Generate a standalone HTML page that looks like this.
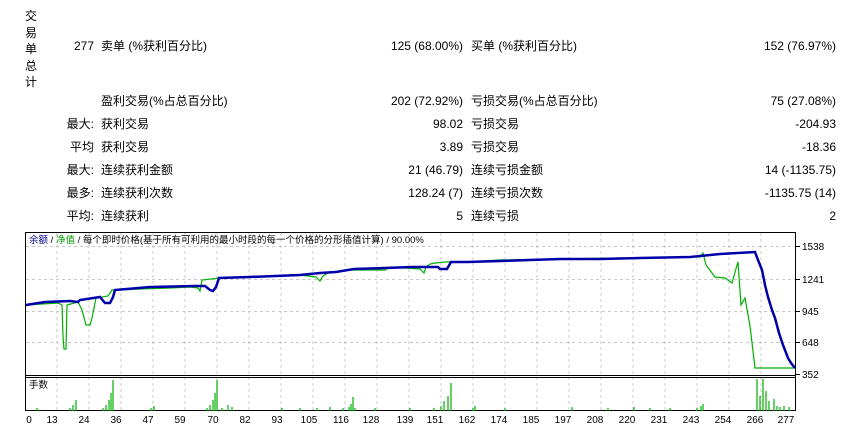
<!DOCTYPE html>
<html><head><meta charset="utf-8"><style>
body{margin:0;width:844px;height:430px;background:#fff;overflow:hidden;position:relative;font-family:"Liberation Sans","Noto Sans CJK SC",sans-serif;font-size:12px;color:#000}
.t{position:absolute;white-space:nowrap;line-height:14px}
.r{text-align:right}
</style></head><body>
<div class="t" style="left:24px;top:8px;width:14px;line-height:16.5px;text-align:center">交<br>易<br>单<br>总<br>计</div>

<div class="t r" style="left:40px;top:39px;width:54px">277</div>
<div class="t" style="left:101px;top:39px">卖单 (%获利百分比)</div>
<div class="t r" style="left:300px;top:39px;width:163px">125 (68.00%)</div>
<div class="t" style="left:471px;top:39px">买单 (%获利百分比)</div>
<div class="t r" style="left:640px;top:39px;width:196px">152 (76.97%)</div>

<div class="t" style="left:101px;top:94px">盈利交易(%占总百分比)</div>
<div class="t r" style="left:300px;top:94px;width:163px">202 (72.92%)</div>
<div class="t" style="left:471px;top:94px">亏损交易(%占总百分比)</div>
<div class="t r" style="left:640px;top:94px;width:196px">75 (27.08%)</div>

<div class="t r" style="left:40px;top:117px;width:54px">最大:</div>
<div class="t" style="left:101px;top:117px">获利交易</div>
<div class="t r" style="left:300px;top:117px;width:163px">98.02</div>
<div class="t" style="left:471px;top:117px">亏损交易</div>
<div class="t r" style="left:640px;top:117px;width:196px">-204.93</div>

<div class="t r" style="left:40px;top:140px;width:54px">平均</div>
<div class="t" style="left:101px;top:140px">获利交易</div>
<div class="t r" style="left:300px;top:140px;width:163px">3.89</div>
<div class="t" style="left:471px;top:140px">亏损交易</div>
<div class="t r" style="left:640px;top:140px;width:196px">-18.36</div>

<div class="t r" style="left:40px;top:163px;width:54px">最大:</div>
<div class="t" style="left:101px;top:163px">连续获利金额</div>
<div class="t r" style="left:300px;top:163px;width:163px">21 (46.79)</div>
<div class="t" style="left:471px;top:163px">连续亏损金额</div>
<div class="t r" style="left:640px;top:163px;width:196px">14 (-1135.75)</div>

<div class="t r" style="left:40px;top:186px;width:54px">最多:</div>
<div class="t" style="left:101px;top:186px">连续获利次数</div>
<div class="t r" style="left:300px;top:186px;width:163px">128.24 (7)</div>
<div class="t" style="left:471px;top:186px">连续亏损次数</div>
<div class="t r" style="left:640px;top:186px;width:196px">-1135.75 (14)</div>

<div class="t r" style="left:40px;top:209px;width:54px">平均:</div>
<div class="t" style="left:101px;top:209px">连续获利</div>
<div class="t r" style="left:300px;top:209px;width:163px">5</div>
<div class="t" style="left:471px;top:209px">连续亏损</div>
<div class="t r" style="left:640px;top:209px;width:196px">2</div>

<svg width="844" height="430" style="position:absolute;left:0;top:0" font-family="Liberation Sans, Noto Sans CJK SC, sans-serif">
<g stroke="#c8c8c8" stroke-dasharray="3,3" stroke-width="1">
<path d="M57 233V410M89 233V410M121 233V410M153 233V410M185 233V410M217 233V410M249 233V410M281 233V410M313 233V410M345 233V410M377 233V410M409 233V410M441 233V410M473 233V410M505 233V410M537 233V410M569 233V410M601 233V410M633 233V410M665 233V410M697 233V410M729 233V410M761 233V410"/>
<path d="M26 246.5H796M26 279.5H796M26 311.5H796M26 342.5H796"/>
</g>
<rect x="25.5" y="232.5" width="770" height="178" fill="none" stroke="#000"/>
<path d="M25 375.5H796M25 377.5H796" stroke="#000" stroke-width="1"/>
<g stroke="#000"><path d="M796 246.5h4M796 279.5h4M796 311.5h4M796 342.5h4M796 374.5h4"/></g>
<g font-size="10" fill="#000">
<text x="802" y="250">1538</text><text x="802" y="283">1241</text><text x="802" y="315">945</text><text x="802" y="346">648</text><text x="802" y="378">352</text>
</g>
<g font-size="10" fill="#000" text-anchor="middle">
<text x="29" y="423">0</text><text x="52" y="423">13</text><text x="84" y="423">24</text><text x="116" y="423">36</text><text x="148" y="423">47</text><text x="180" y="423">59</text><text x="213" y="423">70</text><text x="245" y="423">82</text><text x="277" y="423">93</text><text x="309" y="423">105</text><text x="341" y="423">116</text><text x="371" y="423">128</text><text x="405" y="423">139</text><text x="435" y="423">151</text><text x="467" y="423">162</text><text x="499" y="423">174</text><text x="531" y="423">185</text><text x="563" y="423">197</text><text x="595" y="423">208</text><text x="627" y="423">220</text><text x="659" y="423">231</text><text x="691" y="423">243</text><text x="723" y="423">254</text><text x="755" y="423">266</text><text x="786" y="423">277</text>
</g>
<text x="29" y="243" font-size="9.5"><tspan fill="#00008b">余额</tspan><tspan fill="#000"> / </tspan><tspan fill="#00a000">净值</tspan><tspan fill="#000"> / 每个即时价格(基于所有可利用的最小时段的每一个价格的分形插值计算) / 90.00%</tspan></text>
<text x="29" y="388" font-size="9.5" fill="#000">手数</text>
<path fill="none" stroke="#00b000" stroke-width="1.2" d="M26 305L58 303L62 305L63 336L64 349L66 349L67 305L78 302L82 310L86 325L90 325L92 318L96 298L108 296L112 290L120 290L140 289L170 288L190 287L198 288L200 291L202 280L220 278L250 277L300 275L316 277L320 281L323 276L330 272L350 270L385 270L390 267L420 269L424 273L426 267L430 264L435 263L445 262L465 262L500 260L560 259L620 258L700 257L703 253L706 265L715 277L725 278L732 283L737 265L738 262L741 305L745 298L750 326L755 368L795 368"/>
<path fill="none" stroke="#0000aa" stroke-width="2.5" d="M26 305L45 302L70 301L78 302L80 300L100 297L105 303L110 303L113 297L115 290L150 287L195 286L205 286L210 290L213 291L216 287L219 278L250 277L300 275L320 273L336 272L354 269L385 268L412 267L438 267L440 269L447 269L451 262L467 262L500 261L530 260L560 259L600 259L640 258L690 257L720 254L755 252L758 260L762 270L765 285L768 297L772 310L775 318L779 333L783 345L788 358L791 363L795 368"/>
<g stroke="#00b000" stroke-width="1.2">
<path d="M37 411v-3M70 411v-3M73 411v-6M76 411v-11M103 411v-3M106 411v-6M109 411v-11M111 411v-18M113 411v-31M151 411v-3M154 411v-5M207 411v-3M210 411v-6M213 411v-11M215 411v-18M217 411v-31M222 411v-3M228 411v-6M232 411v-4M282 411v-3M300 411v-3M317 411v-3M330 411v-4M343 411v-3M349 411v-4M351 411v-7M353 411v-14M355 411v-3M375 411v-3M410 411v-3M434 411v-3M441 411v-5M444 411v-10M448 411v-15M451 411v-28M473 411v-3M475 411v-5M505 411v-3M572 411v-4M608 411v-3M634 411v-4M650 411v-3M670 411v-3M697 411v-3M701 411v-5M703 411v-7M757 411v-32M760 411v-15M763 411v-32M766 411v-20M769 411v-10M774 411v-12M777 411v-5M780 411v-4M784 411v-5M789 411v-4"/>
</g>
</svg>
</body></html>
